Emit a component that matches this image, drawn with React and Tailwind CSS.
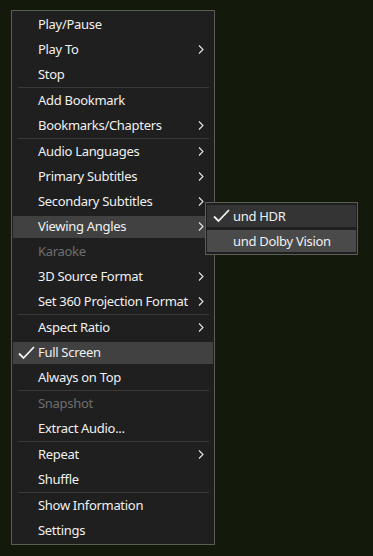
import React from "react";

const items = [
  { t: "Play/Pause" },
  { t: "Play To", sub: true },
  { t: "Stop", sep: true },
  { t: "Add Bookmark" },
  { t: "Bookmarks/Chapters", sub: true, sep: true },
  { t: "Audio Languages", sub: true },
  { t: "Primary Subtitles", sub: true },
  { t: "Secondary Subtitles", sub: true },
  { t: "Viewing Angles", sub: true, hl: true },
  { t: "Karaoke", dis: true },
  { t: "3D Source Format", sub: true },
  { t: "Set 360 Projection Format", sub: true, sep: true },
  { t: "Aspect Ratio", sub: true },
  { t: "Full Screen", hl: true, check: true },
  { t: "Always on Top", sep: true },
  { t: "Snapshot", dis: true },
  { t: "Extract Audio...", sep: true },
  { t: "Repeat", sub: true },
  { t: "Shuffle", sep: true },
  { t: "Show Information" },
  { t: "Settings" },
];

function Check() {
  return (
    <svg width="17" height="14" viewBox="0 0 17 14" fill="none">
      <path d="M1 7.5 L5.5 12 L16 1" stroke="#f2f2f2" strokeWidth="1.8" />
    </svg>
  );
}

function Chevron() {
  return (
    <svg width="6" height="9" viewBox="0 0 6 9" fill="none" className="mr-[9px] shrink-0">
      <path d="M1 0.5 L5 4.5 L1 8.5" stroke="#e8e8e8" strokeWidth="1.1" />
    </svg>
  );
}

function Row({ it, sub }) {
  return (
    <div
      className={`h-[22px] w-full flex items-center text-[13px] tracking-[-0.3px] leading-none ${
        it.bg || ""
      } ${it.dis ? "text-[#6e6e6e]" : "text-[#f0f0f0]"}`}
    >
      <div className={`${sub ? "w-[26px]" : "w-[25px]"} shrink-0 flex justify-end pr-[3px]`}>
        {it.check && <Check />}
      </div>
      <span className="flex-1 whitespace-nowrap">{it.t}</span>
      {it.sub && <Chevron />}
    </div>
  );
}

export default function App() {
  return (
    <div
      className="w-[373px] h-[556px] bg-[#131a0b] pl-[11px] pt-[10px]"
      style={{ fontFamily: '"Noto Sans", "Open Sans", sans-serif' }}
    >
      <div className="relative w-[204px] border border-[#5b5e57] bg-[#1f1f1f] py-px">
        {items.map((it, i) => (
          <React.Fragment key={i}>
            <div className="h-[25px] px-px flex items-center">
              <Row it={{ ...it, bg: it.hl ? "bg-[#414141]" : "" }} />
            </div>
            {it.sep && <div className="h-px bg-[#393939] ml-[6px] mr-[5px]" />}
          </React.Fragment>
        ))}

        <div className="absolute left-[193px] top-[191px] w-[153px] h-[53px] border border-[#5b5e57] bg-[#1f1f1f] px-px py-[2px] flex flex-col gap-[3px]">
          <Row sub it={{ t: "und HDR", check: true, bg: "bg-[#343434]" }} />
          <Row sub it={{ t: "und Dolby Vision", bg: "bg-[#4a4a4a]" }} />
        </div>
      </div>
    </div>
  );
}
